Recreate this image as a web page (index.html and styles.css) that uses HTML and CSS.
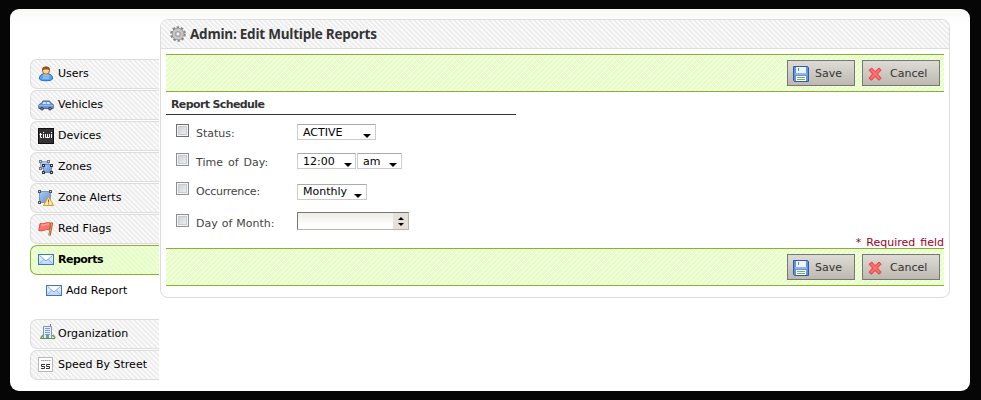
FILE: index.html
```html
<!DOCTYPE html>
<html lang="en">
<head>
<meta charset="utf-8">
<title>Admin: Edit Multiple Reports</title>
<link rel="stylesheet" href="styles.css">
</head>
<body>
<svg class="defs" width="0" height="0" aria-hidden="true">
  <defs>
    <linearGradient id="blue" x1="0" y1="0" x2="1" y2="1"><stop offset="0" stop-color="#a9cbf7"/><stop offset="1" stop-color="#6590d8"/></linearGradient>
    <linearGradient id="mail" x1="0" y1="0" x2="0" y2="1"><stop offset="0" stop-color="#f4f9ff"/><stop offset="1" stop-color="#b9d5f6"/></linearGradient>
    <symbol id="i-envelope" viewBox="0 0 16 16">
      <rect x=".5" y="2.500" width="15" height="10" fill="url(#mail)" stroke="#3f76bd"/>
      <path d="M1.500 11.500L6 7.500M14.500 11.500L10 7.500" stroke="#8db4e4" fill="none"/>
      <path d="M1.500 3.500L8 9L14.500 3.500" fill="#fff" stroke="#82a9dc"/>
    </symbol>
    <symbol id="i-save" viewBox="0 0 16 16">
      <path d="M.5 .5H14.500L15.500 1.500V15.500H1.500L.5 14.500Z" fill="#6292dc" stroke="#2c5cae"/>
      <rect x="3" y="1" width="10" height="6" fill="#eef5ff"/>
      <rect x="5" y="2" width="1" height="3" fill="#5a82c4"/>
      <rect x="2" y="7" width="12" height="2" fill="#8db4f0"/>
      <rect x="3" y="10" width="10" height="5" fill="#fff"/>
      <path d="M4 11.500H12M4 13.500H12" stroke="#6fb35a"/>
    </symbol>
    <symbol id="i-cancel" viewBox="0 0 16 16">
      <path d="M3.800 2L7 5.700L11 2L13.200 4L9.500 8L13.200 12.200L11 14.300L7 10.600L3.500 14.300L1 12.200L4.500 8L1 4.200Z" fill="#fb5f5f" stroke="#e8444a" stroke-linejoin="round"/>
      <path d="M3.300 4L11 12M11 4L3.300 12" stroke="#ff8580" stroke-width=".8"/>
    </symbol>
  </defs>
</svg>
<div class="page">
  <nav class="sidebar">
    <a class="tab"><svg class="icon" viewBox="0 0 16 16">
      <path d="M1.500 13C1 10.500 3 8 5.500 7.800H10.500C13 8 15 10.500 14.500 13C13 14.800 10 14.700 8 14.700S3 14.800 1.500 13Z" fill="#58a6f5" stroke="#2963c4"/>
      <path d="M5 8L8 10.500L11 8V13H5Z" fill="#77bdff"/>
      <path d="M6 7H10V8.500L8 10L6 8.500Z" fill="#ffd19c"/>
      <circle cx="8" cy="4.700" r="3.500" fill="#ffd6a0" stroke="#a95b20"/>
      <path d="M4.200 5C3.500 1.500 5.500 .4 8 .4S12.500 1.500 11.800 5L10.500 3.500L6 3.400Z" fill="#91501f"/>
    </svg><span>Users</span></a>
    <a class="tab"><svg class="icon" viewBox="0 0 16 16">
      <path d="M.8 8.500C1 7 2.500 6.700 3.500 6.500L5 4H11.500L13.500 6.500L15.200 7.500V11.500H.8Z" fill="#6b99da" stroke="#41659e"/>
      <path d="M5.500 5H7.800V7H4.500ZM8.800 5H11L12.200 7H8.800Z" fill="#d8eaff"/>
      <path d="M1 8.500H15" stroke="#91b9ec"/>
      <circle cx="4" cy="11.700" r="1.800" fill="#343941"/><circle cx="12" cy="11.700" r="1.800" fill="#343941"/>
      <circle cx="4" cy="11.700" r=".7" fill="#bbb"/><circle cx="12" cy="11.700" r=".7" fill="#bbb"/>
    </svg><span>Vehicles</span></a>
    <a class="tab"><svg class="icon" viewBox="0 0 16 16">
      <rect x=".5" y=".5" width="15" height="15" fill="#353233" stroke="#111"/>
      <path d="M2.500 5V9.500H4M1.500 6.500H4M5.500 6V10M5.500 4V5M7.500 6V9.500H11.500V6M9.500 6V9.500M13.500 6V10M13.500 4V5" fill="none" stroke="#fff"/>
    </svg><span>Devices</span></a>
    <a class="tab"><svg class="icon" viewBox="0 0 16 16">
      <path d="M2.500 2.500H10.500V9.500H2.500Z" fill="#a7c8f3" stroke="#8eb0df"/>
      <path d="M5.500 5.500H13.500V13.500H5.500Z" fill="url(#blue)" stroke="#5d88cc"/>
      <g fill="#ddd" stroke="#777"><rect x="1.500" y="1.500" width="2" height="2"/><rect x="9.500" y="1.500" width="2" height="2"/><rect x="1.500" y="8.500" width="2" height="2"/></g>
      <g fill="#ddd" stroke="#333"><rect x="4.500" y="5.500" width="2" height="2"/><rect x="12.500" y="5.500" width="2" height="2"/><rect x="4.500" y="12.500" width="2" height="2"/><rect x="12.500" y="12.500" width="2" height="2"/></g>
    </svg><span>Zones</span></a>
    <a class="tab"><svg class="icon" viewBox="0 0 16 16">
      <path d="M1.500 1.500H12.500V12.500H1.500Z" fill="url(#blue)" stroke="#6e98d8"/>
      <g fill="#ddd" stroke="#555"><rect x=".5" y=".5" width="2" height="2"/><rect x="11.500" y=".5" width="2" height="2"/><rect x=".5" y="11.500" width="2" height="2"/></g>
      <path d="M10.500 6.500L15.500 15.500H5.500Z" fill="#ffdc72" stroke="#d99b2b" stroke-linejoin="round"/>
      <path d="M10.500 8.500L13.800 14.500H7.200Z" fill="#fff1b8"/>
      <path d="M10.500 9.500V12.500M10.500 13.300V14.300" stroke="#96631b"/>
    </svg><span>Zone Alerts</span></a>
    <a class="tab"><svg class="icon" viewBox="0 0 16 16">
      <path d="M14 1.500L11.500 14.500" stroke="#9a6126" stroke-width="2.400"/><path d="M13.800 2L11.400 14" stroke="#dba55a" stroke-width="1"/>
      <path d="M2 2.500C5 4 8 .5 12.500 2L11.300 8.700C7 7.500 5 11 .8 9.500Z" fill="#fa7770" stroke="#e44a4a"/>
      <path d="M3.500 4C6 4.800 8.500 2.500 11 3" stroke="#ffc0b9" fill="none"/>
    </svg><span>Red Flags</span></a>
    <a class="tab active"><svg class="icon"><use href="#i-envelope"/></svg><span>Reports</span></a>
    <a class="subitem"><svg class="icon"><use href="#i-envelope"/></svg><span>Add Report</span></a>
    <a class="tab org"><svg class="icon" viewBox="0 0 16 16">
      <path d="M1 14.500C1 11 3 10.500 4 12M12 12C13.500 10 15 12 15 14.500" fill="#6aad56" stroke="#5d9c4d"/>
      <path d="M3.500 2.500H11.500V14.500H3.500Z" fill="#e7f0fa" stroke="#8195ad"/>
      <path d="M5 4.500H10M5 6.500H10M5 8.500H10M5 10.500H10" stroke="#739bcc"/>
      <rect x="6" y="11" width="3" height="3.500" fill="#8391a3"/>
      <path d="M10.500 0V2" stroke="#d44"/><path d="M0 14.500H15" stroke="#579447"/>
    </svg><span>Organization</span></a>
    <a class="tab"><svg class="icon" viewBox="0 0 16 16">
      <rect x=".5" y=".5" width="14" height="14" fill="#fff" stroke="#b8b8b8"/>
      <path d="M3 3.500H12.500" stroke="#999" stroke-dasharray="1.500 .5"/>
      <path d="M7 7.500H3.500V9.500H6.500V11.500H3M12 7.500H8.500V9.500H11.500V11.500H8" fill="none" stroke="#333"/>
    </svg><span>Speed By Street</span></a>
  </nav>
  <main class="panel">
    <h1 class="title"><svg class="icon" viewBox="0 0 16 16">
      <circle cx="8" cy="8" r="6.500" fill="none" stroke="#858585" stroke-width="2.600" stroke-dasharray="2.300 1.784"/>
      <circle cx="8" cy="8" r="4.300" fill="none" stroke="#8c8c8c" stroke-width="3.800"/>
      <circle cx="8" cy="8" r="4.200" fill="none" stroke="#c6c6c6" stroke-width="2.800"/>
      <circle cx="8" cy="8" r="2.200" fill="#f2f2f2" stroke="#999"/>
    </svg><span>Admin: Edit Multiple Reports</span></h1>
    <div class="content">
      <div class="toolbar">
        <button class="btn save"><svg class="icon"><use href="#i-save"/></svg><span>Save</span></button>
        <button class="btn cancel"><svg class="icon"><use href="#i-cancel"/></svg><span>Cancel</span></button>
      </div>
      <h2 class="section">Report Schedule</h2>
      <div class="fields">
        <div class="row"><i class="check focus"></i><span class="label">Status:</span><span class="select status">ACTIVE</span></div>
        <div class="row"><i class="check"></i><span class="label">Time of Day:</span><span class="select hour">12:00</span><span class="select ampm">am</span></div>
        <div class="row"><i class="check"></i><span class="label tight">Occurrence:</span><span class="select occurs">Monthly</span></div>
        <div class="row last"><i class="check"></i><span class="label month">Day of Month:</span><span class="spinner"><span class="value"></span><span class="steps"><i class="up"></i><i class="down"></i></span></span></div>
      </div>
      <div class="required">* Required field</div>
      <div class="toolbar">
        <button class="btn save"><svg class="icon"><use href="#i-save"/></svg><span>Save</span></button>
        <button class="btn cancel"><svg class="icon"><use href="#i-cancel"/></svg><span>Cancel</span></button>
      </div>
    </div>
  </main>
</div>
</body>
</html>
```
FILE: styles.css
```css
* { box-sizing: border-box; }
body {
  margin: 0;
  height: 400px;
  padding: 9px 11px 9px 10px;
  overflow: hidden;
  background: #060606;
  color: #000;
  font: 11px/14px "DejaVu Sans", Verdana, sans-serif;
}
.defs { display: block; }
.page {
  display: flex;
  align-items: flex-start;
  height: 382px;
  padding: 10px 20px 0;
  border-radius: 9px;
  background: linear-gradient(#f8f8f6, #fff 14px);
}
.icon { flex: none; width: 16px; height: 16px; }
.sidebar { width: 130px; padding-top: 40px; }
.tab {
  display: flex;
  align-items: center;
  gap: 4px;
  width: 129px;
  height: 30px;
  margin-bottom: 1px;
  padding-left: 7px;
  border: 1px solid #dcdcdc;
  border-right: 0;
  border-radius: 7px 0 0 7px;
  background: linear-gradient(45deg, #fbfbfb 12.5%, #eee 12.5% 50%, #fbfbfb 50% 62.5%, #eee 62.5%) 0 0 / 5px 5px;
}
.tab .icon { margin-top: -1px; }
.tab.active {
  border-color: #8aaf33;
  background: linear-gradient(45deg, #f1fedd 12.5%, #e6fec4 12.5% 50%, #f1fedd 50% 62.5%, #e6fec4 62.5%) 0 0 / 5px 5px;
  font-weight: bold;
  letter-spacing: -.5px;
}
.tab.org { margin-top: 13px; padding-left: 9px; gap: 2px; }
.tab.org .icon { margin-top: -4px; }
.subitem {
  display: flex;
  align-items: center;
  gap: 4px;
  height: 30px;
  padding-left: 16px;
}
.panel {
  width: 790px;
  height: 279px;
  border: 1px solid #dcdcdc;
  border-radius: 8px;
  background: #fff;
  overflow: hidden;
}
.title {
  display: flex;
  align-items: center;
  gap: 4px;
  height: 29px;
  margin: 0;
  padding-left: 9px;
  border-bottom: 1px solid #dcdcdc;
  background: linear-gradient(45deg, #fbfbfb 12.5%, #eee 12.5% 50%, #fbfbfb 50% 62.5%, #eee 62.5%) 0 0 / 5px 5px;
  color: #333;
  font: bold 13.5px/18px "Open Sans", "Trebuchet MS", sans-serif;
  letter-spacing: -.24px;
}
.content { padding: 5px 5px 0; }
.toolbar {
  display: flex;
  align-items: center;
  justify-content: flex-end;
  gap: 7px;
  height: 38px;
  padding-right: 4px;
  border: solid #8aaf33;
  border-width: 1px 0;
  background: linear-gradient(-45deg, #fcfff8 12.5%, #e7fec6 12.5% 50%, #fcfff8 50% 62.5%, #e7fec6 62.5%) 0 0 / 5px 5px;
}
.btn {
  display: flex;
  align-items: center;
  height: 26px;
  padding: 0 0 0 5px;
  border: 1px solid #777;
  background: linear-gradient(#dedbd6, #bdb9b0);
  color: #333;
  font: inherit;
}
.btn span { margin-top: 1px; }
.btn .icon { margin-top: 1px; }
.btn.save { width: 68px; gap: 6px; }
.btn.cancel { width: 78px; gap: 6px; }
.section {
  width: 350px;
  height: 23px;
  margin: 0;
  padding: 5px 0 0 5px;
  border-bottom: 1px solid #333;
  color: #333;
  font-size: 11px;
  line-height: 15px;
  letter-spacing: -.62px;
}
.fields { height: 120px; padding: 9px 0 0 10px; }
.row { display: flex; align-items: flex-start; height: 29px; color: #444; }
.row.last { padding-top: 3px; }
.check {
  width: 13px;
  height: 13px;
  border: 1px solid #8e8f8f;
  background: linear-gradient(135deg, #c6cbd1, #f4f4f4);
  box-shadow: inset 0 0 0 1px #f4f4f4, inset 0 0 0 2px #c8cbd0;
}
.check.focus { border-color: #6e7072; }
.label { width: 108px; padding: 3px 0 0 7px; white-space: nowrap; word-spacing: 1.5px; }
.label.tight { letter-spacing: -.25px; }
.label.month { word-spacing: .5px; }
.select {
  position: relative;
  height: 16px;
  padding-left: 5px;
  border: 1px solid #ccc;
  border-top-color: #aaa;
  background: #fff;
  color: #000;
  line-height: 15px;
}
.select::after {
  content: "";
  position: absolute;
  right: 4px;
  bottom: 1px;
  border: 4px solid transparent;
  border-top-color: #000;
  border-bottom: 0;
}
.status { width: 79px; }
.hour { width: 59px; margin-right: 1px; }
.hour::after { right: 3px; }
.ampm { width: 45px; }
.occurs { width: 70px; margin-top: 2px; line-height: 14px; }
.spinner { display: flex; width: 112px; height: 18px; margin-top: -2px; border: 1px solid #b8b4ac; border-top-color: #777; border-left-color: #777; }
.value { flex: 1; background: linear-gradient(#efede8, #fff 80%); }
.steps { display: flex; flex-direction: column; align-items: center; justify-content: center; gap: 3px; width: 15px; background: #e5e1da; }
.up, .down { border: 3px solid transparent; }
.up { border-bottom-color: #000; border-top: 0; }
.down { border-top-color: #000; border-bottom: 0; }
.required { height: 13px; line-height: 15px; text-align: right; word-spacing: 1.5px; color: #a0001c; }
```
